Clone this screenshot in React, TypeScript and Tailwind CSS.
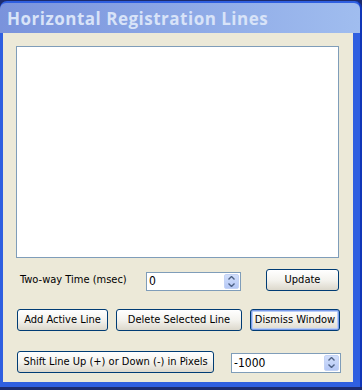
import React from 'react'

const uiFont = { fontFamily: '"DejaVu Sans Condensed", "Liberation Sans", sans-serif' }

function XpButton({ label, width, isDefault }: { label: string; width: string; isDefault?: boolean }) {
  return (
    <div
      className={`${width} h-[22px] flex items-center justify-center rounded-[3px] border border-[#003c74] bg-gradient-to-b from-white via-[#f4f3ee] to-[#dcd8cc] text-[11px] text-black ${
        isDefault ? 'shadow-[inset_0_0_0_1px_#7b9bea,inset_0_0_0_2px_#b9cdf5]' : ''
      }`}
    >
      {label}
    </div>
  )
}

function SpinBox({ value, width, height }: { value: string; width: string; height: string }) {
  return (
    <div className={`${width} ${height} flex items-stretch border border-[#7f9db9] bg-white p-[1px]`}>
      <div className="flex-1 flex items-center pl-[1px] text-[12px] text-black">{value}</div>
      {/* up / down spinner */}
      <div className="w-[15px] flex flex-col items-center justify-center gap-[3px] rounded-[2px] bg-gradient-to-b from-[#d2dffb] to-[#b5c8f6] border border-[#c4d3f5]">
        <svg width="7" height="4" viewBox="0 0 7 4">
          <path d="M0.5 3.5 L3.5 0.5 L6.5 3.5" fill="none" stroke="#4d6185" strokeWidth="1.4" />
        </svg>
        <svg width="7" height="4" viewBox="0 0 7 4">
          <path d="M0.5 0.5 L3.5 3.5 L6.5 0.5" fill="none" stroke="#4d6185" strokeWidth="1.4" />
        </svg>
      </div>
    </div>
  )
}

export default function App() {
  return (
    <div className="w-[362px] h-[390px] overflow-hidden bg-[#1c2b6e] pt-px" style={uiFont}>
      {/* window frame */}
      <div className="h-[386px] flex flex-col rounded-t-[7px] bg-[#2f5fe0] pl-[3px] pr-[7px] pt-[2px] pb-[5px] border-r-[2px] border-r-[#1036b8]">
        {/* Title bar (inactive) */}
        <div className="h-[30px] flex items-center bg-gradient-to-r from-[#7a93dc] to-[#a0bdef] -ml-[3px] -mr-[7px] pl-[7px] pt-[2px] rounded-t-[6px]">
          <span
            className="text-[17px] font-bold text-[#d8e3f8] tracking-[0.5px]"
            style={{ fontFamily: '"Open Sans", "Lato", sans-serif' }}
          >
            Horizontal Registration Lines
          </span>
        </div>

        {/* Body */}
        <div className="flex-1 flex flex-col bg-[#ece9d8]">
          <div className="ml-[13px] mt-[13px] w-[323px] h-[212px] border border-[#7f9db9] bg-white" />

          {/* Two-way time row */}
          <div className="flex items-center mt-[11px] h-[22px]">
            <div className="ml-[17px] w-[126px] text-[11px] text-black">Two-way Time (msec)</div>
            <div className="mt-[2px]">
              <SpinBox value="0" width="w-[95px]" height="h-[19px]" />
            </div>
            <div className="ml-[25px]">
              <XpButton label="Update" width="w-[73px]" />
            </div>
          </div>

          {/* action buttons */}
          <div className="flex items-center mt-[18px] ml-[14px] gap-[8px]">
            <XpButton label="Add Active Line" width="w-[91px]" />
            <XpButton label="Delete Selected Line" width="w-[126px]" />
            <XpButton label="Dismiss Window" width="w-[90px]" isDefault />
          </div>

          {/* shift row */}
          <div className="flex items-center mt-[20px] ml-[14px]">
            <XpButton label="Shift Line Up (+) or Down (-) in Pixels" width="w-[197px]" />
            <div className="ml-[17px] mt-[1px]">
              <SpinBox value="-1000" width="w-[110px]" height="h-[20px]" />
            </div>
          </div>
        </div>
      </div>
    </div>
  )
}
